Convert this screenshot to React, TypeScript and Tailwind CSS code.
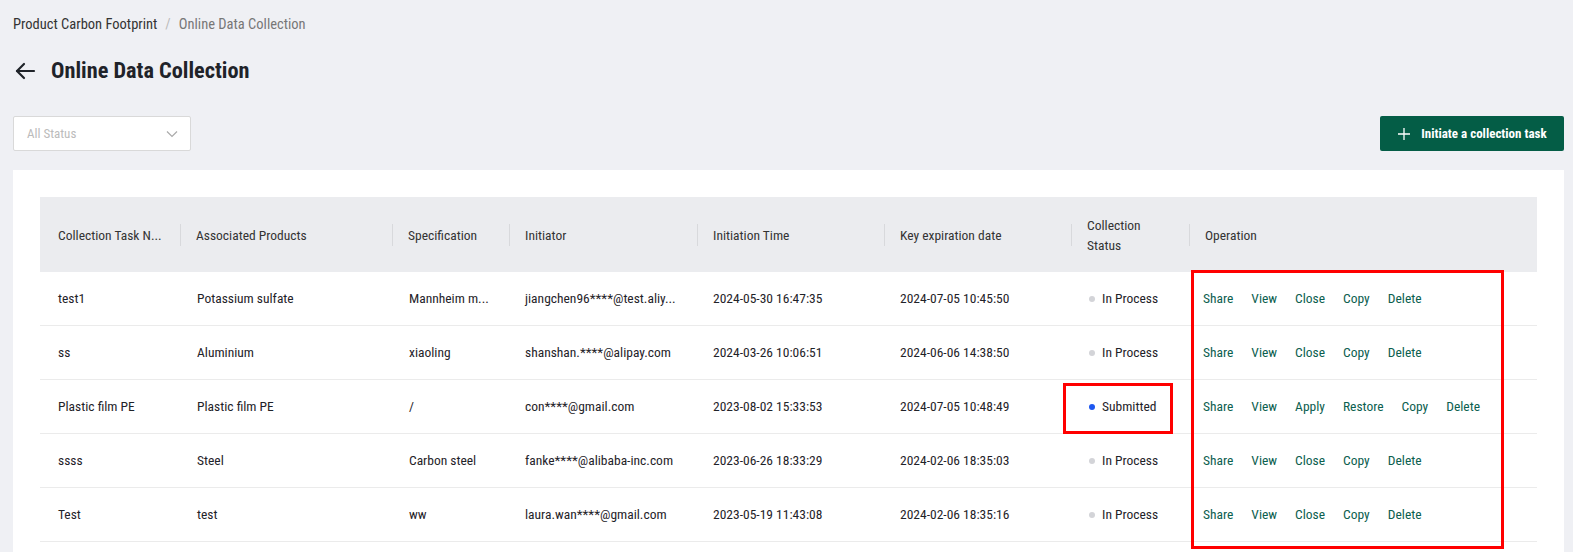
import React from "react";

type Row = {
  name: string;
  product: string;
  spec: string;
  initiator: string;
  time: string;
  expire: string;
  status: "In Process" | "Submitted";
  ops: string[];
};

const rows: Row[] = [
  { name: "test1", product: "Potassium sulfate", spec: "Mannheim m...", initiator: "jiangchen96****@test.aliy...", time: "2024-05-30 16:47:35", expire: "2024-07-05 10:45:50", status: "In Process", ops: ["Share", "View", "Close", "Copy", "Delete"] },
  { name: "ss", product: "Aluminium", spec: "xiaoling", initiator: "shanshan.****@alipay.com", time: "2024-03-26 10:06:51", expire: "2024-06-06 14:38:50", status: "In Process", ops: ["Share", "View", "Close", "Copy", "Delete"] },
  { name: "Plastic film PE", product: "Plastic film PE", spec: "/", initiator: "con****@gmail.com", time: "2023-08-02 15:33:53", expire: "2024-07-05 10:48:49", status: "Submitted", ops: ["Share", "View", "Apply", "Restore", "Copy", "Delete"] },
  { name: "ssss", product: "Steel", spec: "Carbon steel", initiator: "fanke****@alibaba-inc.com", time: "2023-06-26 18:33:29", expire: "2024-02-06 18:35:03", status: "In Process", ops: ["Share", "View", "Close", "Copy", "Delete"] },
  { name: "Test", product: "test", spec: "ww", initiator: "laura.wan****@gmail.com", time: "2023-05-19 11:43:08", expire: "2024-02-06 18:35:16", status: "In Process", ops: ["Share", "View", "Close", "Copy", "Delete"] },
];

const headers: React.ReactNode[] = [
  "Collection Task N...",
  "Associated Products",
  "Specification",
  "Initiator",
  "Initiation Time",
  "Key expiration date",
  <>
    Collection
    <br />
    Status
  </>,
  "Operation",
];

const grid = "grid grid-cols-[140px_212px_117px_188px_187px_187px_118px_1fr]";

export default function App() {
  return (
    <div
      className="h-screen overflow-hidden bg-[#eff0f4] pl-[13px] pr-[9px] text-[#1f2329]"
      style={{ fontFamily: '"Roboto Condensed", "Liberation Sans Narrow", "DejaVu Sans Condensed", Roboto, sans-serif' }}
    >
      <div className="pt-[15px] flex items-center h-[35px] text-[14.5px] leading-5">
        <span className="text-[#333]">Product Carbon Footprint</span>
        <span className="mx-[8px] text-[#bbb]">/</span>
        <span className="text-[#777]">Online Data Collection</span>
      </div>

      <div className="mt-[20px] flex items-center h-8 gap-[14px]">
        <svg width="24" height="24" viewBox="0 0 24 24" fill="none" stroke="#1f2329" strokeWidth="2.2" strokeLinecap="round" strokeLinejoin="round">
          <path d="M21 12H4" />
          <path d="M11 5l-7 7 7 7" />
        </svg>
        <h1 className="text-[22.3px] font-bold text-[#1f2329]">Online Data Collection</h1>
      </div>

      <div className="mt-[29px] flex items-center justify-between h-[35px]">
        <div className="w-[178px] h-[35px] bg-white border border-[#d9d9d9] rounded-[2px] flex items-center justify-between pl-[13px] pr-[11px]">
          <span className="text-[13px] text-[#bbbbbb]">All Status</span>
          <svg width="14" height="14" viewBox="0 0 14 14" fill="none" stroke="#aaaaaa" strokeWidth="1.2">
            <path d="M2 4.5l5 5 5-5" />
          </svg>
        </div>
        <button className="w-[184px] h-[35px] bg-[#045d46] rounded-[2px] text-white flex items-center justify-center gap-[10px] text-[13px] font-bold">
          <svg width="14" height="14" viewBox="0 0 14 14" fill="none" stroke="white" strokeWidth="1.3">
            <path d="M7 1v12M1 7h12" />
          </svg>
          <span>Initiate a collection task</span>
        </button>
      </div>

      <div className="relative mt-[19px] bg-white px-[27px] pt-[27px] pb-[20px]">
        <div className={`${grid} h-[75px] bg-[#ebecef] items-center text-[13.5px] text-[#333]`}>
          {headers.map((h, i) => (
            <div key={i} className={`relative ${i === 0 ? "pl-[18px]" : "pl-[16px]"} pr-[8px] leading-[20px]`}>
              {i > 0 && <span className="absolute left-0 top-1/2 -translate-y-1/2 h-[22px] w-px bg-[#d8d9dc]" />}
              {h}
            </div>
          ))}
        </div>
        {rows.map((r) => (
          <div key={r.name} className={`${grid} h-[54px] items-center border-b border-[#ebebeb] text-[13.5px] text-[#1f2329]`}>
            <div className="pl-[18px] whitespace-nowrap">{r.name}</div>
            <div className="pl-[17px] whitespace-nowrap">{r.product}</div>
            <div className="pl-[17px] whitespace-nowrap">{r.spec}</div>
            <div className="pl-[16px] whitespace-nowrap">{r.initiator}</div>
            <div className="pl-[16px] whitespace-nowrap">{r.time}</div>
            <div className="pl-[16px] whitespace-nowrap">{r.expire}</div>
            <div className="pl-[18px] whitespace-nowrap flex items-center gap-[7px]">
              <span className={`w-[6px] h-[6px] rounded-full ${r.status === "Submitted" ? "bg-[#1d57f0]" : "bg-[#d3d4d8]"}`} />
              {r.status}
            </div>
            <div className="pl-[14px] flex items-center gap-[18px] whitespace-nowrap">
              {r.ops.map((o) => (
                <span key={o} className="text-[#0c604f]">{o}</span>
              ))}
            </div>
          </div>
        ))}

        <div className="absolute left-[1050px] top-[213px] w-[110px] h-[51px] border-[3px] border-[#ff0000] pointer-events-none" />
        <div className="absolute left-[1178px] top-[100px] w-[313px] h-[279px] border-[3px] border-[#ff0000] pointer-events-none" />
      </div>
    </div>
  );
}
